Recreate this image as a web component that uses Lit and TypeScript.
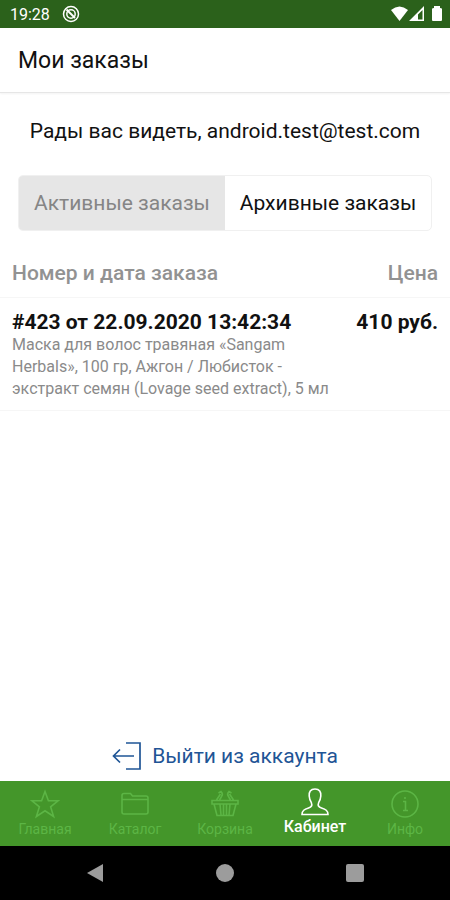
import { LitElement, html, css, svg } from "lit";
import { customElement, state } from "lit/decorators.js";
import { classMap } from "lit/directives/class-map.js";

const icons = {
  star: svg`<path d="M15 2.500 L18.400 11.800 H28 L20.600 17.800 L23.600 27.500 L15 21.800 L6.400 27.500 L9.400 17.800 L2 11.800 H11.600 Z"/>`,
  folder: svg`<path d="M2 23 V6.500 Q2 4.500 4 4.500 H10.500 L12.500 7 H26 Q28 7 28 9 V23 Q28 25 26 25 H4 Q2 25 2 23 M2 10.500 H28"/>`,
  basket: svg`<path d="M2 11.500 H28 V15 H2 Z M4 15 L7 26.500 H23 L26 15 M10 15 L11 26 M13.500 15 V26 M16.500 15 V26 M20 15 L19 26 M6.500 11 L10.500 5 M23.500 11 L19.500 5"/><path d="M8.500 4 L11 2.500 Q13.500 5 11.500 7.500 L9.500 11 M21.500 4 L19 2.500 Q16.500 5 18.500 7.500 L20.500 11"/>`,
  user: svg`<path d="M15 2 C10.500 2 8.800 5 9.200 9 C9.400 11.500 9.800 13.500 11.300 15.500 C12.500 18.500 11.500 20 8.500 21 C4.500 22.300 2 23.500 2 27.500 H28 C28 23.500 25.500 22.300 21.500 21 C18.500 20 17.500 18.500 18.700 15.500 C20.200 13.500 20.600 11.500 20.800 9 C21.200 5 19.500 2 15 2 Z"/>`,
  info: svg`<circle cx="15" cy="15" r="13"/><path d="M13 12.500 H15.500 V21.500 M13 21.500 H18 M15 8 V10"/>`,
};

const tabs = [
  { label: "Главная", icon: icons.star },
  { label: "Каталог", icon: icons.folder },
  { label: "Корзина", icon: icons.basket },
  { label: "Кабинет", icon: icons.user },
  { label: "Инфо", icon: icons.info },
];

@customElement("app-root")
export class AppRoot extends LitElement {
  static styles = css`
    :host {
      display: flex;
      flex-direction: column;
      min-height: 100vh;
      background: #fff;
      color: #111;
      font-family: Roboto, "Liberation Sans", sans-serif;
    }
    button {
      font: inherit;
      color: inherit;
      background: none;
      border: 0;
      padding: 0;
      cursor: pointer;
    }
    svg {
      display: block;
      fill: none;
      stroke: currentColor;
    }
    .solid {
      fill: currentColor;
      stroke: none;
    }
    .status {
      display: flex;
      align-items: center;
      justify-content: space-between;
      height: 28px;
      padding: 0 8px 0 10px;
      background: #2b611b;
      color: #fff;
      font-size: 16px;
    }
    .group {
      display: flex;
      align-items: center;
      gap: 12px;
    }
    header {
      display: flex;
      align-items: center;
      height: 64px;
      padding: 0 18px;
      border-bottom: 1px solid #e6e6e6;
      box-shadow: 0 1px 2px #0000000d;
    }
    h1 {
      margin: 0;
      font-size: 23px;
      font-weight: 400;
    }
    main {
      flex: 1;
      display: flex;
      flex-direction: column;
    }
    .welcome {
      margin: 25px 0 31px;
      text-align: center;
      font-size: 21px;
      line-height: 26px;
    }
    .segments {
      display: flex;
      height: 56px;
      margin: 0 18px;
      box-sizing: border-box;
      border: 1px solid #f0f0f0;
      border-radius: 5px;
      overflow: hidden;
      font-size: 21px;
    }
    .segment {
      flex: 1;
      white-space: nowrap;
    }
    .segment.selected {
      background: #e6e6e6;
      color: #858585;
    }
    table {
      width: 100%;
      margin-top: 17px;
      border-collapse: collapse;
      font-size: 21px;
      line-height: 24px;
    }
    th,
    td {
      padding: 0 12px;
      text-align: left;
      vertical-align: top;
      border-bottom: 1px solid #f6f6f6;
    }
    th {
      height: 49px;
      vertical-align: middle;
      color: #929292;
      font-weight: 500;
    }
    td {
      padding-top: 12px;
      padding-bottom: 10px;
    }
    .price {
      padding-left: 0;
      text-align: right;
      white-space: nowrap;
    }
    .strong {
      font-weight: 700;
    }
    .items {
      max-width: 330px;
      color: #8a8a8a;
      font-size: 16px;
      line-height: 22px;
    }
    .logout {
      display: flex;
      align-items: center;
      align-self: center;
      gap: 10px;
      height: 51px;
      margin-top: auto;
      color: #1f5596;
      font-size: 21px;
    }
    .tabs {
      display: flex;
      height: 65px;
      background: #44962a;
      color: #5cb545;
    }
    .tab {
      flex: 1;
      display: flex;
      flex-direction: column;
      align-items: center;
      justify-content: center;
      gap: 1px;
      font-size: 14px;
      line-height: 18px;
    }
    .tab.current {
      color: #fff;
      font-size: 16px;
      font-weight: 500;
      padding-bottom: 4px;
    }
    .system {
      display: flex;
      justify-content: center;
      gap: 110px;
      height: 54px;
      background: #000;
      color: #9c9c9c;
    }
  `;

  @state() private current = "Кабинет";
  @state() private segment = 0;

  render() {
    return html`
      <div class="status">
        <div class="group">
          <span>19:28</span>
          <svg width="18" height="18" viewBox="0 0 18 18" stroke-width="1.500" aria-hidden="true">
            <circle cx="9" cy="9" r="7.500" />
            <circle cx="9" cy="9" r="4.200" />
            <path d="M4.500 4.500 L13 13" stroke-width="2" />
          </svg>
        </div>
        <svg class="solid" width="52" height="18" viewBox="0 0 52 18" aria-hidden="true">
          <path d="M1 5 Q9.500 -2 18 5 L9.500 16 Z" />
          <path fill-rule="evenodd" d="M19 16 L34 1 V16 Z M28 9.500 V14.500 H32.500 V5 Z" />
          <path d="M42 4 Q42 3 44 3 V1 H50 V3 Q52 3 52 4 V15 Q52 16 51 16 H43 Q42 16 42 15 Z" />
        </svg>
      </div>
      <header><h1>Мои заказы</h1></header>
      <main>
        <p class="welcome">Рады вас видеть, android.test@test.com</p>
        <div class="segments">
          ${["Активные заказы", "Архивные заказы"].map(
            (label, i) => html`<button
              class=${classMap({ segment: true, selected: this.segment === i })}
              aria-pressed=${this.segment === i}
              @click=${() => (this.segment = i)}
            >${label}</button>`
          )}
        </div>
        <table>
          <thead>
            <tr><th scope="col">Номер и дата заказа</th><th scope="col" class="price">Цена</th></tr>
          </thead>
          <tbody>
            <tr>
              <td>
                <div class="strong">#423 от 22.09.2020 13:42:34</div>
                <div class="items">Маска для волос травяная «Sangam Herbals», 100 гр, Ажгон / Любисток - экстракт семян (Lovage seed extract), 5 мл</div>
              </td>
              <td class="price strong">410 руб.</td>
            </tr>
          </tbody>
        </table>
        <button class="logout">
          <svg width="30" height="30" viewBox="0 0 30 30" stroke-width="1.700" aria-hidden="true">
            <path d="M14 2 H28 V28 H14 M22 15 H2 M8 8.500 L1.500 15 L8 21.500" />
          </svg>
          Выйти из аккаунта
        </button>
      </main>
      <nav class="tabs">
        ${tabs.map(
          (t) => html`<button
            class=${classMap({ tab: true, current: this.current === t.label })}
            @click=${() => (this.current = t.label)}
          >
            <svg width="30" height="30" viewBox="0 0 30 30" stroke-width="1.600" aria-hidden="true">${t.icon}</svg>
            <span>${t.label}</span>
          </button>`
        )}
      </nav>
      <div class="system">
        <button aria-label="Назад"><svg class="solid" width="20" height="20" viewBox="0 0 20 20"><path d="M2 10 L18 1 V19 Z" /></svg></button>
        <button aria-label="Домой"><svg class="solid" width="20" height="20" viewBox="0 0 20 20"><circle cx="10" cy="10" r="9" /></svg></button>
        <button aria-label="Недавние"><svg class="solid" width="20" height="20" viewBox="0 0 20 20"><rect x="1" y="1" width="18" height="18" rx="2" /></svg></button>
      </div>
    `;
  }
}
